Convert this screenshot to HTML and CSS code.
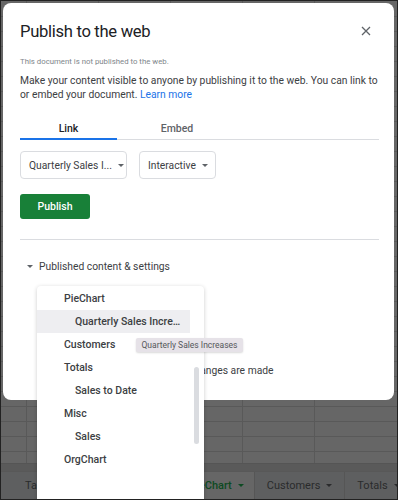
FILE: index.html
```html
<!DOCTYPE html>
<html lang="en">
<head>
  <meta charset="utf-8">
  <title>Publish to the web</title>
  <link rel="stylesheet" href="styles.css">
</head>
<body>
  <div class="screen">
    <div class="sheet">
      <div class="sheet-grid"></div>
      <div class="sheet-scroll"></div>
      <div class="sheet-tabs">
        <div class="sheet-tab first">Table</div>
        <div class="sheet-tab active">PieChart <span class="tab-caret"></span></div>
        <div class="sheet-tab">Customers <span class="tab-caret"></span></div>
        <div class="sheet-tab">Totals <span class="tab-caret"></span></div>
      </div>
    </div>

    <div class="dialog">
      <div class="dialog-head">
        <h1 class="dialog-title">Publish to the web</h1>
        <svg class="close-icon" width="10" height="10" viewBox="0 0 10 10">
          <path d="M1 1L9 9M9 1L1 9" stroke="#5f6368" stroke-width="1.3" fill="none"/>
        </svg>
      </div>
      <p class="status">This document is not published to the web.</p>
      <p class="intro">Make your content visible to anyone by publishing it to the web. You can link to or embed your document. <a href="#">Learn more</a></p>

      <div class="tabs">
        <div class="tab selected">Link</div>
        <div class="tab">Embed</div>
      </div>

      <div class="selects">
        <div class="select wide">Quarterly Sales I... <span class="caret"></span></div>
        <div class="select">Interactive <span class="caret"></span></div>
      </div>

      <button class="publish-btn">Publish</button>

      <div class="divider"></div>

      <div class="settings-toggle"><span class="caret"></span> Published content &amp; settings</div>
      <div class="settings-body">
        <label class="republish"><span class="check"></span>Automatically republish when changes are made</label>
      </div>
    </div>

    <div class="sheet-menu">
      <div class="menu-item">PieChart</div>
      <div class="menu-item sub hover">Quarterly Sales Incre…</div>
      <div class="menu-item">Customers</div>
      <div class="menu-item">Totals</div>
      <div class="menu-item sub">Sales to Date</div>
      <div class="menu-item">Misc</div>
      <div class="menu-item sub">Sales</div>
      <div class="menu-item">OrgChart</div>
      <div class="menu-scrollbar"></div>
    </div>

    <div class="tooltip">Quarterly Sales Increases</div>
  </div>
</body>
</html>
```

FILE: styles.css
```css
:root {
  --text-dark: #202124;
  --text-body: #3c4043;
  --text-grey: #5f6368;
  --blue: #1a73e8;
  --green: #188038;
  --line: #dadce0;
}
* {
  margin: 0;
  padding: 0;
  box-sizing: border-box;
}
body {
  font-family: Roboto, "Liberation Sans", sans-serif;
  background: #1d1d1d;
}
.screen {
  position: relative;
  width: 398px;
  height: 500px;
  overflow: hidden;
  border: 1px solid #222;
  background: #666;
}

/* dimmed spreadsheet behind the dialog */
.sheet {
  display: flex;
  flex-direction: column;
  height: 100%;
}
.sheet-grid {
  flex: 1;
  background-color: #666;
  background-image:
    repeating-linear-gradient(to bottom, transparent 0 14px, #595959 14px 15px),
    repeating-linear-gradient(to right, transparent 0 71px, #595959 71px 72px);
  background-position: 0 1px, -46px 0;
}
.sheet-scroll {
  height: 8px;
  background: #5a5a5a;
  border-top: 1px solid #555;
}
.sheet-tabs {
  height: 28px;
  display: flex;
  background: #5e5f60;
  border-top: 1px solid #585858;
  padding-left: 24px;
}
.sheet-tab {
  flex-shrink: 0;
  display: flex;
  align-items: center;
  gap: 6px;
  padding: 0 12px;
  font-size: 11px;
  color: #2a2b2c;
  border-right: 1px solid #565656;
  white-space: nowrap;
}
.sheet-tab.first {
  padding-left: 0;
  width: 152px;
}
.sheet-tab.active {
  background: #666;
  color: #0d4a22;
  font-weight: 500;
  padding-right: 10px;
}
.tab-caret {
  border-left: 3.5px solid transparent;
  border-right: 3.5px solid transparent;
  border-top: 3.5px solid currentColor;
}

/* dialog */
.dialog {
  position: absolute;
  top: 2px;
  left: 2px;
  width: 391px;
  height: 397px;
  background: #fff;
  border-radius: 8px;
  padding: 0 15px 0 17px;
}
.dialog-head {
  display: flex;
  justify-content: space-between;
  align-items: center;
  height: 56px;
  padding-right: 8px;
}
.dialog-title {
  font-size: 16.6px;
  font-weight: 400;
  color: var(--text-dark);
  letter-spacing: -0.3px;
}
.status {
  font-size: 7.8px;
  color: #80868b;
  margin-top: -2px;
}
.intro {
  margin-top: 8px;
  font-size: 10.3px;
  line-height: 14px;
  color: var(--text-body);
}
.intro a {
  color: var(--blue);
  text-decoration: none;
}
.tabs {
  display: flex;
  margin-top: 20px;
  border-bottom: 1px solid var(--line);
}
.tab {
  width: 97px;
  text-align: center;
  font-size: 10.5px;
  font-weight: 500;
  color: var(--text-grey);
  padding-bottom: 3px;
}
.tab + .tab {
  width: 120px;
}
.tab.selected {
  color: var(--text-dark);
  border-bottom: 2px solid var(--blue);
  margin-bottom: -1px;
}
.selects {
  display: flex;
  gap: 12px;
  margin-top: 11px;
}
.select {
  display: flex;
  align-items: center;
  justify-content: space-between;
  gap: 6px;
  height: 28px;
  padding: 0 7px 0 8px;
  border: 1px solid var(--line);
  border-radius: 4px;
  font-size: 10.3px;
  color: var(--text-body);
  white-space: nowrap;
}
.select.wide {
  width: 107px;
  padding-right: 8px;
}
.caret {
  border-left: 3px solid transparent;
  border-right: 3px solid transparent;
  border-top: 3px solid var(--text-grey);
}
.publish-btn {
  display: block;
  margin-top: 15px;
  width: 70px;
  height: 25px;
  border: 0;
  border-radius: 3px;
  background: var(--green);
  color: #fff;
  font-family: inherit;
  font-size: 10.5px;
  font-weight: 500;
}
.divider {
  margin-top: 20px;
  border-top: 1px solid var(--line);
}
.settings-toggle {
  display: flex;
  align-items: center;
  gap: 6px;
  margin-top: 20px;
  padding-left: 7px;
  font-size: 10.3px;
  color: var(--text-body);
}
.settings-body {
  padding-left: 21px;
}
.republish {
  display: flex;
  align-items: center;
  gap: 0;
  margin-top: 91px;
  font-size: 10.3px;
  color: var(--text-body);
}
.check {
  width: 11px;
  height: 11px;
  border: 1.5px solid var(--text-grey);
  border-radius: 2px;
}

/* sheet picker menu */
.sheet-menu {
  position: absolute;
  top: 285px;
  left: 36px;
  width: 167px;
  height: 240px;
  background: #fff;
  border-radius: 4px;
  box-shadow: 0 1px 4px rgba(0, 0, 0, 0.2);
  padding: 1px 0;
}
.menu-item {
  height: 23px;
  line-height: 23px;
  padding-left: 27px;
  width: 153px;
  font-size: 10.5px;
  font-weight: 500;
  color: #3c4043;
}
.menu-item.sub {
  padding-left: 38px;
}
.menu-item.hover {
  background: #eeeef1;
}
.menu-scrollbar {
  position: absolute;
  top: 81px;
  right: 5px;
  width: 5px;
  height: 77px;
  border-radius: 3px;
  background: #dadce0;
}
.tooltip {
  position: absolute;
  top: 337px;
  left: 135px;
  width: 107px;
  height: 14px;
  line-height: 14px;
  text-align: center;
  border-radius: 2px;
  background: #e6e2e8;
  box-shadow: 0 1px 2px rgba(0, 0, 0, 0.15);
  font-size: 8.5px;
  color: #55575a;
}
```
